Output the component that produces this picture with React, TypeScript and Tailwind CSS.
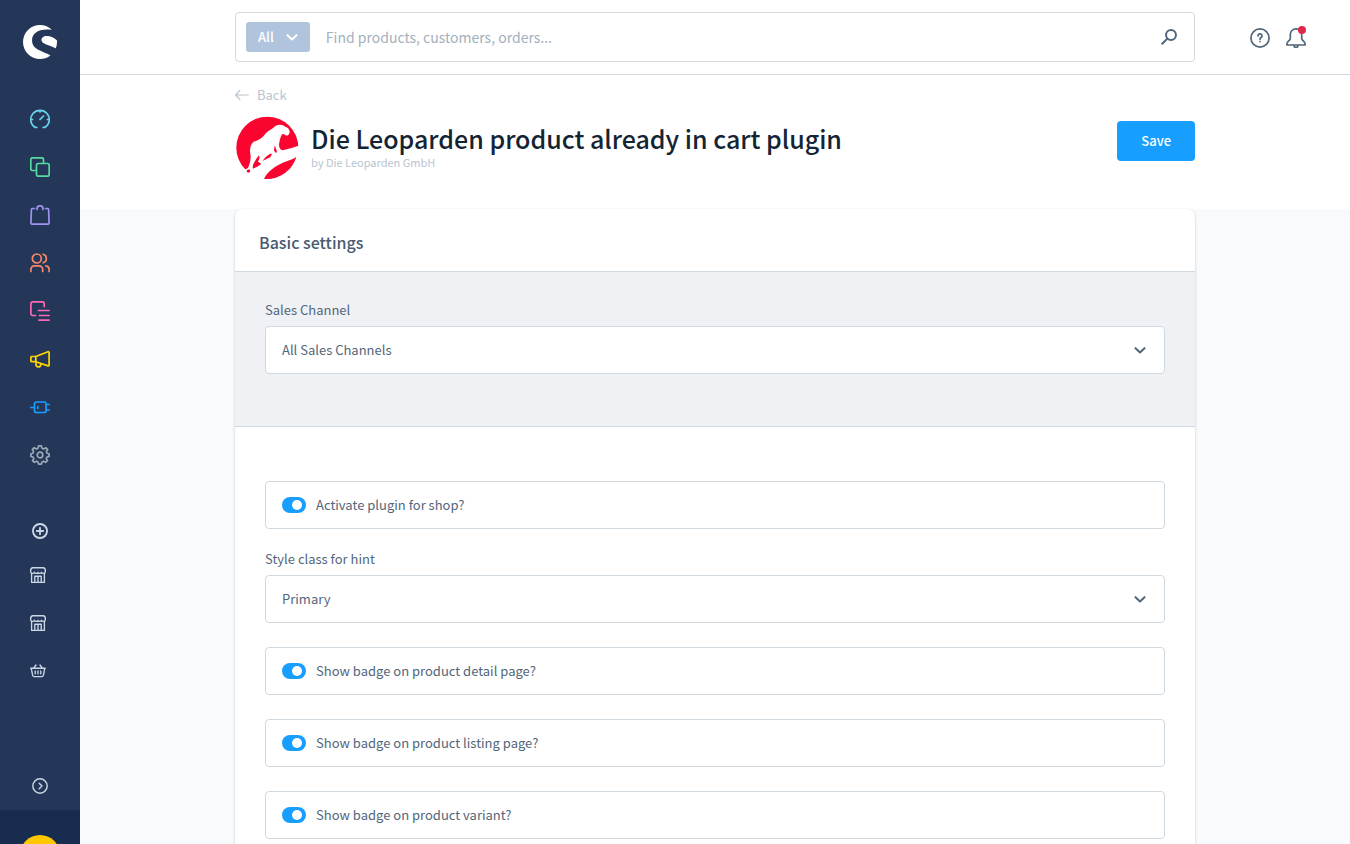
import type { ReactNode } from "react"
import { SiShopware } from "react-icons/si"

type IconProps = { children: ReactNode; className?: string; width?: number }

const Icon = ({ children, className = "size-5", width = 1.7 }: IconProps) => (
    <svg viewBox="0 0 20 20" fill="none" stroke="currentColor" strokeWidth={width} strokeLinecap="round" strokeLinejoin="round" className={`${className} shrink-0`} aria-hidden="true">
        {children}
    </svg>
)

const storefront = (
    <>
        <path d="M3.500 1H16.500C18 1 19.200 3 19.200 5.500C19.200 7 18 8 16.800 8C15.500 8 14.500 7.200 14.500 6.500C14 7.500 13.200 8 12.200 8C11 8 10 7.200 10 6.500C10 7.200 9 8 7.800 8C6.800 8 6 7.500 5.500 6.500C5.500 7.200 4.500 8 3.200 8C2 8 .8 7 .8 5.500C.8 3 2 1 3.500 1Z" />
        <path d="M2 8V19.200H18V8M6 19V11.500H14V19M10 11.500V19" />
    </>
)

const menu = [
    {
        label: "Dashboard",
        color: "text-[#69d3ec]",
        icon: <path d="M6.800 18.300H4.800A9.300 9.300 0 1 1 15.200 18.300H13.200M10 1V3M.9 10.500H2.600M17.400 10.500H19.100M10 10.500L13.500 7" />,
    },
    {
        label: "Catalogues",
        color: "text-[#57d9a3]",
        icon: (
            <>
                <path d="M6 13.500H2.500A1.700 1.700 0 0 1 .8 11.800V2.500A1.700 1.700 0 0 1 2.500 .8H11.800A1.700 1.700 0 0 1 13.500 2.500V6" />
                <rect x="6.500" y="6.500" width="12.700" height="12.700" rx="1.700" />
            </>
        ),
    },
    {
        label: "Orders",
        color: "text-[#a092f0]",
        icon: <path d="M4.500 3.500H2.400A1 1 0 0 0 1.400 4.500L.9 18A1.200 1.200 0 0 0 2 19.200H18A1.200 1.200 0 0 0 19.100 18L18.600 4.500A1 1 0 0 0 17.600 3.500H15.500M7 4.500V3.500A2.700 2.700 0 0 1 9.700 .9H10.300A2.700 2.700 0 0 1 13 3.500V4.500" />,
    },
    {
        label: "Customers",
        color: "text-[#f88962]",
        icon: (
            <>
                <circle cx="6.800" cy="5.500" r="4.500" />
                <path d="M.9 18.500V16.500A3.700 3.700 0 0 1 4.500 12.800H9A3.700 3.700 0 0 1 12.700 16.500V18.500M13.200 1.200A4.500 4.500 0 0 1 13.200 9.800M15.800 12.800A3.700 3.700 0 0 1 19.100 16.500V18.500" />
            </>
        ),
    },
    {
        label: "Content",
        color: "text-[#ff68b4]",
        icon: <path d="M5.500 14.500H2.500A1.700 1.700 0 0 1 .9 12.800V2.500A1.700 1.700 0 0 1 2.500 .9H12.500A1.700 1.700 0 0 1 14.200 2.500V5.500M8.500 9.500H19.100M9.500 14.500H19.100M9 19.100H19.100" />,
    },
    {
        label: "Marketing",
        color: "text-[#ffd700]",
        icon: <path d="M5.800 7.500L18 2.700A.9 .9 0 0 1 19.100 3.600V16A.9 .9 0 0 1 18 16.900L5.800 12.700ZM5.800 7.500H1.500A.7 .7 0 0 0 .9 8.200V12A.7 .7 0 0 0 1.500 12.700H5.800M6 13V15.200A2.200 2.200 0 0 0 10.700 15.800V14.500" />,
    },
    {
        label: "Extensions",
        color: "text-[#189eff]",
        icon: <path d="M.9 10.500H4.500M6.500 5H14.500A1.500 1.500 0 0 1 16 6.500V14A1.500 1.500 0 0 1 14.500 15.500H6.500A2 2 0 0 1 4.500 13.500V7A2 2 0 0 1 6.500 5ZM16 7.500H19.100M16 13H19.100M7.800 9.500V11.500" />,
    },
    {
        label: "Settings",
        color: "text-[#9aa8b5]",
        icon: (
            <>
                <path d="M8.600 .9H11.400L12 3.300L13.700 4L16 2.700L17.700 4.600L16.400 6.500L17 8.200L19.100 8.800V11.400L17 12L16.200 13.700L17.500 15.700L15.600 17.400L13.700 16.200L12 17L11.400 19.100H8.600L8 17L6.300 16.200L4.400 17.400L2.500 15.700L3.800 13.700L3 12L.9 11.400V8.800L3 8.200L3.600 6.500L2.300 4.600L4.200 2.700L6.300 4L8 3.300Z" />
                <circle cx="10" cy="10" r="2.800" />
            </>
        ),
    },
]

const channels = [
    { label: "Storefront", icon: storefront },
    { label: "Second storefront", icon: storefront },
    {
        label: "Basket",
        icon: <path d="M.9 6.500H19.100M1.500 6.500L3.300 15.500A2 2 0 0 0 5.200 17H14.800A2 2 0 0 0 16.700 15.500L18.500 6.500M4.500 6.500L7.500 2.500M15.500 6.500L12.500 2.500M6.500 10V13.500M10 10V13.500M13.500 10V13.500" />,
    },
]

function Sidebar() {
    return (
        <aside className="flex h-full w-20 shrink-0 flex-col overflow-hidden bg-[#243758]">
            <a href="#" aria-label="Home" className="mt-[25px] flex justify-center text-white">
                <SiShopware className="size-[34px]" />
            </a>
            <nav className="mt-9 flex flex-col">
                {menu.map((item) => (
                    <a key={item.label} href="#" aria-label={item.label} className={`flex h-12 items-center justify-center ${item.color}`}>
                        <Icon>{item.icon}</Icon>
                    </a>
                ))}
            </nav>
            <div className="mt-7 flex flex-col text-[#ccd7e6]">
                <button aria-label="Add sales channel" className="flex h-12 items-center justify-center">
                    <Icon className="size-4" width={2.300}>
                        <circle cx="10" cy="10" r="8.800" />
                        <path d="M10 6V14M6 10H14" />
                    </Icon>
                </button>
                <div className="-mt-1 flex flex-col pr-1">
                    {channels.map((c) => (
                        <a key={c.label} href="#" aria-label={c.label} className="flex h-12 items-center justify-center">
                            <Icon className="size-4" width={1.7}>{c.icon}</Icon>
                        </a>
                    ))}
                </div>
            </div>
            <button aria-label="Expand menu" className="mt-auto flex h-12 items-center justify-center text-[#ccd7e6]">
                <Icon className="size-4" width={1.8}>
                    <circle cx="10" cy="10" r="9" />
                    <path d="M9 6.500L12.500 10L9 13.500" />
                </Icon>
            </button>
            <div className="flex h-[34px] shrink-0 justify-center overflow-hidden bg-[#182c4f] pt-[25px]">
                <span className="size-10 shrink-0 rounded-full bg-[#ffc700]" />
            </div>
        </aside>
    )
}

function Header() {
    return (
        <header className="grid shrink-0 grid-cols-[1fr_minmax(0,960px)_1fr] items-center border-b border-[#d1d9e0] bg-white py-3">
            <div className="col-start-2 flex h-[50px] items-center rounded border border-[#d1d9e0] px-2.5">
                <button className="flex h-[30px] items-center gap-3 rounded-[3px] bg-[#b0c5dd] px-3 text-[13px] font-medium text-white">
                    All
                    <Icon className="size-3" width={3.4}>
                        <path d="M2.500 7L10 14L17.500 7" />
                    </Icon>
                </button>
                <input aria-label="Search" placeholder="Find products, customers, orders..." className="min-w-0 flex-1 px-4 pb-px text-sm text-[#52667a] outline-none placeholder:text-[#a3b0bd]" />
                <button aria-label="Start search" className="mr-[7px] text-[#52667a]">
                    <Icon className="size-4" width={2.500}>
                        <circle cx="12.500" cy="7.500" r="6.200" />
                        <path d="M8 12L1.500 18.500" />
                    </Icon>
                </button>
            </div>
            <div className="flex items-center justify-end gap-4 pt-0.5 pr-11 text-[#52667a]">
                <button aria-label="Help">
                    <Icon>
                        <circle cx="10" cy="10" r="9.100" />
                        <path d="M8 8A2 2 0 1 1 11 9.600C10.300 10 10 10.400 10 11.300M10 13.500V13.600" />
                    </Icon>
                </button>
                <button aria-label="Notifications" className="relative">
                    <Icon>
                        <path d="M10 .9A5.600 5.600 0 0 0 4.300 6.500V10.500C4.300 12.500 .9 13.500 .9 16V17H19.100V16C19.100 13.500 15.700 12.500 15.700 10.500V6.500A5.600 5.600 0 0 0 10 .9ZM8 17.500A2 2 0 0 0 12 17.500" />
                    </Icon>
                    <span className="absolute -top-0.5 right-0 size-2 rounded-full bg-[#de294c]" />
                </button>
            </div>
        </header>
    )
}

const PluginLogo = () => (
    <svg viewBox="15 18 192 192" className="size-16 shrink-0" role="img" aria-label="Die Leoparden">
        <circle cx="112" cy="113" r="93" fill="#fa0530" />
        <path fill="#fff" d="M137 47C148 42 160 44 166 50C174 52 178 58 179 64C179 70 177 76 171 77C166 76 162 71 157 72C152 78 149 90 147 104C147 112 151 120 158 121C175 116 190 113 208 106L215 135L150 215H40L42 180L54 174C60 160 62 150 62 138C58 122 60 104 70 96C84 90 96 85 104 74C112 62 126 58 137 47Z" />
        <path fill="#fa0530" d="M102 207C112 183 135 170 158 158C172 153 184 150 199 141C186 182 148 210 102 207ZM68 176L69 164L78 148L87 136L89 144L84 155L94 161L82 170ZM97 153L108 140L120 131L126 132L121 142ZM132 122L134 106L137 113L141 126L138 129ZM51 180L59 178L61 185L55 188L50 185Z" />
    </svg>
)

const channelOptions = ["All Sales Channels", "Storefront", "Headless"]
const styleOptions = ["Primary", "Secondary", "Success"]

function SelectField({ id, label, options }: { id: string; label: string; options: string[] }) {
    return (
        <div className="flex flex-col gap-2.5">
            <label htmlFor={id} className="text-[13px] leading-3">{label}</label>
            <div className="relative flex items-center">
                <select id={id} className="h-12 w-full appearance-none rounded border border-[#d1d9e0] bg-white px-4 text-[13px] outline-none">
                    {options.map((o) => <option key={o}>{o}</option>)}
                </select>
                <Icon className="pointer-events-none absolute right-[19px] size-3" width={3.4}>
                    <path d="M2.500 7L10 14L17.500 7" />
                </Icon>
            </div>
        </div>
    )
}

function SwitchField({ label }: { label: string }) {
    return (
        <label className="flex h-12 items-center gap-2.5 rounded border border-[#d1d9e0] px-4 text-[13px]">
            <input
                type="checkbox"
                role="switch"
                defaultChecked
                className="flex h-4 w-6 appearance-none items-center rounded-full bg-[#c2ccd6] px-1 before:size-2.5 before:rounded-full before:bg-white checked:justify-end checked:bg-[#189eff]"
            />
            {label}
        </label>
    )
}

export default function App() {
    return (
        <div className="flex h-screen overflow-hidden bg-[#f9fafb] font-['Noto_Sans_CJK_SC','Noto_Sans',sans-serif] text-[#52667a]">
            <Sidebar />
            <div className="flex min-w-0 flex-1 flex-col">
                <Header />
                <main className="min-h-0 flex-1 overflow-y-auto [scrollbar-width:none]">
                    <div className="bg-white pt-2.5 pb-[29px]">
                        <div className="mx-auto max-w-[960px]">
                            <a href="#" className="flex w-fit items-center gap-2 text-[13px] leading-5 text-[#b8c4d0]">
                                <Icon className="size-3.5">
                                    <path d="M19 10H1M7 3.500L.9 10L7 16.500" />
                                </Icon>
                                Back
                            </a>
                            <div className="mt-[11px] flex items-center gap-3">
                                <PluginLogo />
                                <div className="min-w-0 flex-1 pb-1">
                                    <h1 className="text-[25px] leading-8 font-medium text-[#142433]">Die Leoparden product already in cart plugin</h1>
                                    <p className="text-[11px] leading-4 text-[#b8c4d0]">by Die Leoparden GmbH</p>
                                </div>
                                <button className="mb-3.5 h-10 rounded bg-[#189eff] px-6 text-[13px] font-medium text-white">Save</button>
                            </div>
                        </div>
                    </div>
                    <section className="mx-auto max-w-[960px] rounded-lg bg-white shadow-[0_1px_3px_rgba(0,0,0,0.2)]">
                        <h2 className="border-b border-[#d1d9e0] px-6 pt-5 pb-4 text-base leading-[26px] font-medium text-[#475a70]">Basic settings</h2>
                        <div className="border-b border-[#d1d9e0] bg-[#f0f1f5] px-[30px] pt-8 pb-13">
                            <SelectField id="sales-channel" label="Sales Channel" options={channelOptions} />
                        </div>
                        <div className="flex flex-col gap-6 px-[30px] pt-[54px] pb-8">
                            <SwitchField label="Activate plugin for shop?" />
                            <SelectField id="style-class" label="Style class for hint" options={styleOptions} />
                            <SwitchField label="Show badge on product detail page?" />
                            <SwitchField label="Show badge on product listing page?" />
                            <SwitchField label="Show badge on product variant?" />
                        </div>
                    </section>
                </main>
            </div>
        </div>
    )
}
